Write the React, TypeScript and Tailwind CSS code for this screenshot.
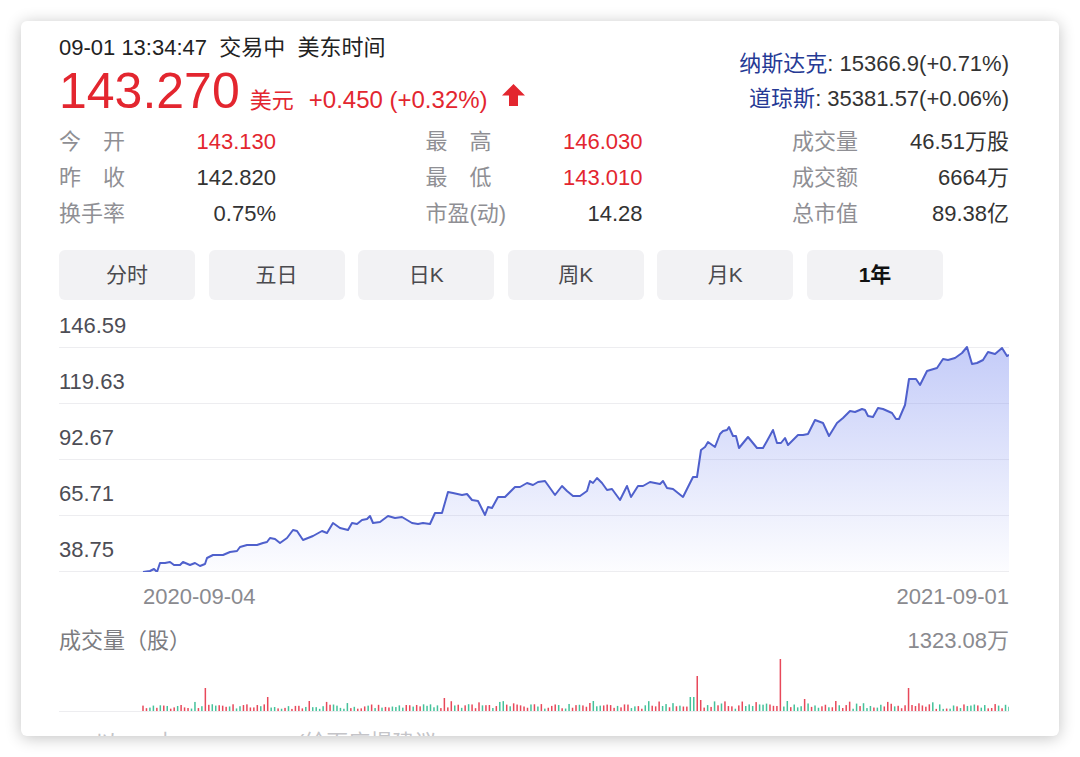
import React from 'react'

// chart path, page coordinates (x, y)
const PRICE_PTS: Array<[number, number]> = [
    [143, 572], [150, 571], [154, 569], [157, 572], [160, 563], [165, 563], [170, 562], [174, 565], [180, 565], [183, 562],
    [190, 565], [195, 563], [200, 566], [205, 564], [207, 558], [213, 555], [223, 555], [230, 552], [237, 551], [240, 547],
    [247, 545], [257, 545], [263, 543], [267, 542], [270, 538], [275, 539], [280, 543], [287, 538], [293, 530], [297, 531],
    [303, 540], [313, 536], [322, 531], [327, 533], [333, 523], [340, 528], [348, 530], [352, 523], [357, 524], [362, 520],
    [367, 519], [370, 516], [373, 523], [380, 522], [388, 516], [395, 518], [402, 517], [412, 523], [418, 524], [423, 523],
    [430, 524], [435, 513], [442, 513], [448, 492], [453, 493], [462, 495], [467, 494], [472, 500], [478, 501], [485, 515],
    [488, 507], [492, 508], [498, 497], [505, 497], [515, 487], [520, 487], [527, 483], [533, 485], [538, 482], [545, 481],
    [555, 495], [562, 486], [567, 491], [573, 496], [580, 496], [587, 491], [590, 481], [593, 483], [597, 478], [602, 483],
    [607, 490], [612, 489], [620, 500], [627, 486], [631, 497], [638, 486], [643, 486], [650, 482], [660, 484], [663, 481],
    [667, 488], [673, 489], [683, 497], [693, 477], [697, 477], [701, 450], [705, 447], [708, 442], [715, 447], [720, 434],
    [723, 431], [727, 430], [729, 427], [733, 436], [736, 436], [739, 448], [748, 437], [757, 448], [763, 448], [767, 441],
    [773, 430], [777, 443], [781, 443], [785, 438], [788, 445], [798, 435], [803, 435], [808, 434], [815, 420], [823, 423],
    [829, 436], [837, 423], [843, 418], [850, 411], [855, 412], [862, 409], [865, 410], [868, 416], [873, 417], [878, 408],
    [883, 409], [892, 413], [896, 419], [899, 419], [905, 405], [909, 379], [916, 379], [920, 385], [927, 371], [937, 368],
    [943, 359], [948, 360], [955, 358], [962, 353], [967, 347], [972, 364], [977, 363], [983, 360], [988, 352], [995, 354],
    [1002, 348], [1007, 356], [1009, 355],
]

const SPIKES: Array<[number, number, string]> = [
    [207, 23, 'r'], [269, 14, 'r'], [446, 13, 'r'], [594, 10, 'g'], [692, 14, 'g'], [697, 35, 'r'], [701, 11, 'r'],
    [782, 52, 'r'], [805, 12, 'r'], [835, 10, 'r'], [907, 23, 'r'],
]

function rng(seed: number) {
    let a = seed
    return () => {
        a |= 0; a = a + 0x6d2b79f5 | 0
        let t = Math.imul(a ^ a >>> 15, 1 | a)
        t = t + Math.imul(t ^ t >>> 7, 61 | t) ^ t
        return ((t ^ t >>> 14) >>> 0) / 4294967296
    }
}

function buildBars() {
    const rand = rng(17)
    const bars: Array<{ x: number; h: number; c: string }> = []
    const n = 250
    for (let i = 0; i <= n; i++) {
        const px = 143 + i * (866 / n)
        let h = 2 + rand() * 5
        if (rand() > 0.82) h += 3
        let c = rand() > 0.5 ? 'r' : 'g'
        for (const [sx, sh, sc] of SPIKES) {
            if (Math.abs(sx - px) < 1.8) { h = sh; c = sc }
        }
        bars.push({ x: px - 59, h, c })
    }
    return bars
}

const BARS = buildBars()

function Label2({ a, b }: { a: string; b: string }) {
    return (
        <span className='flex w-[66px] justify-between'>
            <span>{a}</span><span>{b}</span>
        </span>
    )
}

const STATS = [
    [
        { label: <Label2 a='今' b='开' />, value: '143.130', red: true },
        { label: <Label2 a='昨' b='收' />, value: '142.820', red: false },
        { label: '换手率', value: '0.75%', red: false },
    ],
    [
        { label: <Label2 a='最' b='高' />, value: '146.030', red: true },
        { label: <Label2 a='最' b='低' />, value: '143.010', red: true },
        { label: '市盈(动)', value: '14.28', red: false },
    ],
    [
        { label: '成交量', value: '46.51万股', red: false },
        { label: '成交额', value: '6664万', red: false },
        { label: '总市值', value: '89.38亿', red: false },
    ],
]

const TABS = ['分时', '五日', '日K', '周K', '月K', '1年']
const YLABELS = ['146.59', '119.63', '92.67', '65.71', '38.75']

export default function App() {
    const linePts = PRICE_PTS.map(([x, y]) => `${x - 59},${y - 300}`).join(' ')
    const areaPts = `${143 - 59},271 ${linePts} ${1009 - 59},271`

    return (
        <div className="w-[1080px] h-[757px] bg-white pt-[21px] pl-[21px] font-['Liberation_Sans','Noto_Sans_CJK_SC',sans-serif]">
            <div className='w-[1038px] h-[715px] overflow-hidden rounded-[6px] bg-white pt-[12px] pl-[38px] shadow-[0_2px_16px_rgba(0,0,0,0.24)]'>
                <div className='w-[950px]'>
                    {/* header */}
                    <div className='flex items-start justify-between'>
                        <div>
                            <div className='h-[30px] text-[22px] leading-[30px] text-[#222] whitespace-pre'>
                                09-01 13:34:47  交易中  美东时间
                            </div>
                            <div className='flex h-[56px] items-baseline text-[#e3262f]'>
                                <span className='text-[50px] leading-[56px]'>143.270</span>
                                <span className='ml-[10px] text-[22px]'>美元</span>
                                <span className='ml-[15px] text-[24px]'>+0.450 (+0.32%)</span>
                                <svg className='ml-[14px] self-center mt-[8px]' width='23' height='22' viewBox='0 0 23 22'>
                                    <polygon points='11.5,0 23,11.5 16,11.5 16,22 7,22 7,11.5 0,11.5' fill='#e3262f' />
                                </svg>
                            </div>
                        </div>
                        <div className='mt-[13px] flex flex-col items-end text-[22px] leading-[35px] text-[#333]'>
                            <div><span className='text-[#263a95]'>纳斯达克</span>: 15366.9(+0.71%)</div>
                            <div><span className='text-[#263a95]'>道琼斯</span>: 35381.57(+0.06%)</div>
                        </div>
                    </div>

                    {/* stats */}
                    <div className='mt-[4px] flex justify-between text-[22px]'>
                        {STATS.map((col, ci) => (
                            <div key={ci} className='flex w-[217px] flex-col'>
                                {col.map((row, ri) => (
                                    <div key={ri} className='flex h-[36px] items-center justify-between'>
                                        <span className='text-[#8f8f94]'>{row.label}</span>
                                        <span className={row.red ? 'text-[#e3262f]' : 'text-[#333]'}>{row.value}</span>
                                    </div>
                                ))}
                            </div>
                        ))}
                    </div>

                    {/* tabs */}
                    <div className='mt-[19px] flex gap-[13.6px]'>
                        {TABS.map((t) => (
                            <div
                                key={t}
                                className={
                                    'flex h-[50px] w-[136px] items-center justify-center rounded-[6px] bg-[#f2f2f4] text-[21px] ' +
                                    (t === '1年' ? 'font-bold text-[#111]' : 'text-[#4a4a4e]')
                                }
                            >
                                {t}
                            </div>
                        ))}
                    </div>

                    {/* price chart */}
                    <div className='relative'>
                        {YLABELS.map((l, i) => (
                            <div
                                key={l}
                                className={(i === 0 ? 'h-[48px] ' : 'h-[56px] ') + 'flex items-end border-b border-[#ededf0]'}
                            >
                                <span className='mb-[9px] text-[22px] leading-[24px] text-[#4d4d55]'>{l}</span>
                            </div>
                        ))}
                        <svg className='absolute left-0 top-0' width='950' height='272' viewBox='0 0 950 272'>
                            <defs>
                                <linearGradient id='fillG' x1='0' y1='47' x2='0' y2='271' gradientUnits='userSpaceOnUse'>
                                    <stop offset='0' stopColor='#7d8ef0' stopOpacity='0.45' />
                                    <stop offset='1' stopColor='#7d8ef0' stopOpacity='0.02' />
                                </linearGradient>
                            </defs>
                            <polygon points={areaPts} fill='url(#fillG)' />
                            <polyline points={linePts} fill='none' stroke='#4f60cc' strokeWidth='2' strokeLinejoin='round' />
                        </svg>
                    </div>

                    {/* dates */}
                    <div className='mt-[9px] flex h-[30px] items-center justify-between pl-[84px] text-[22px] text-[#8a8a8f]'>
                        <span>2020-09-04</span>
                        <span>2021-09-01</span>
                    </div>

                    {/* volume */}
                    <div className='mt-[14px] flex h-[30px] items-center justify-between text-[22px]'>
                        <span className='text-[#7c7c80]'>成交量（股）</span>
                        <span className='text-[#8a8a8f]'>1323.08万</span>
                    </div>
                    <div className='h-[57px] border-b border-[#ededf0]'>
                        <svg width='950' height='56' viewBox='0 0 950 56'>
                            {BARS.map((b, i) => (
                                <rect
                                    key={i}
                                    x={b.x - 0.75}
                                    y={56 - b.h}
                                    width='1.5'
                                    height={b.h}
                                    fill={b.c === 'r' ? '#e8485a' : '#45c29a'}
                                />
                            ))}
                        </svg>
                    </div>

                    {/* footer, clipped by card edge */}
                    <div className='mt-[15px] flex h-[30px] items-center text-[22px] text-[#c4c4c8]'>
                        <span className='ml-[36px]'>以</span>
                        <span className='ml-[38px]'>上</span>
                        <span className='ml-[120px]'>(给百度提建议</span>
                    </div>
                </div>
            </div>
        </div>
    )
}
